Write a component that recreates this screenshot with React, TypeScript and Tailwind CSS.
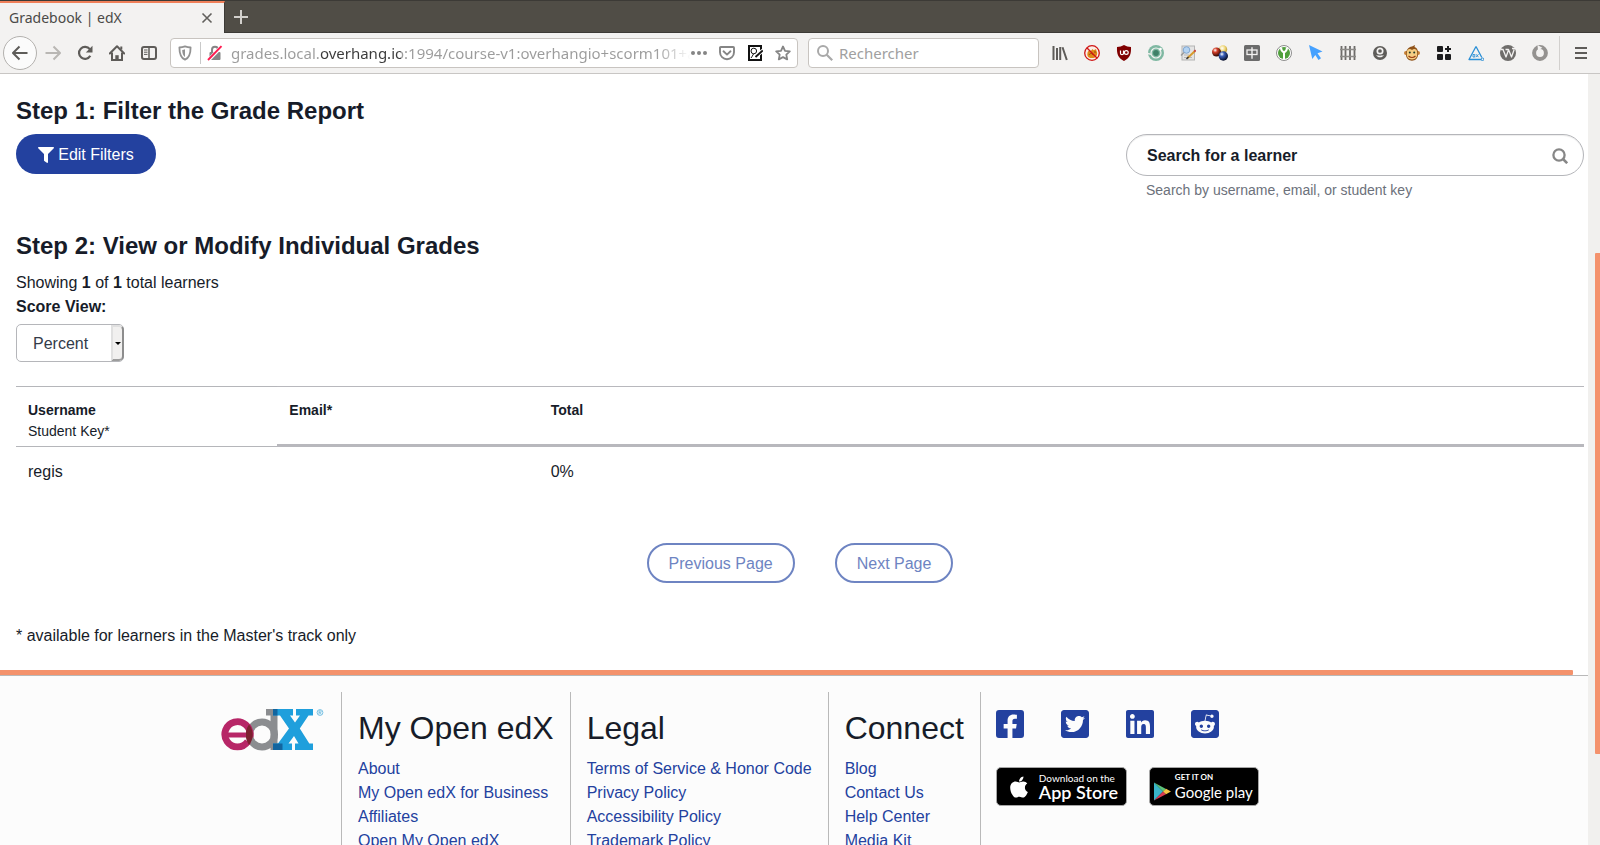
import type { ReactNode } from "react";
import {
  FaApple,
  FaFacebookSquare,
  FaFilter,
  FaLinkedin,
  FaRedditSquare,
  FaTwitterSquare,
} from "react-icons/fa";

function Glyph({ children, box = 16 }: { children: ReactNode; box?: number }) {
  return (
    <svg
      className="size-4 shrink-0"
      viewBox={`0 0 ${box} ${box}`}
      fill="none"
      aria-hidden="true"
    >
      {children}
    </svg>
  );
}

function ToolButton({ label, children }: { label: string; children: ReactNode }) {
  return (
    <button type="button" aria-label={label} className="flex size-8 shrink-0 items-center justify-center">
      {children}
    </button>
  );
}

function TabStrip() {
  return (
    <div className="flex h-[33px] shrink-0 border-t border-[#3c3a36] bg-[#504d46]">
      <div className="flex w-[225px] items-center justify-between border-t-2 border-r border-t-[#f0805a] border-r-[#3c3a36] bg-[#f3f2f1] pr-[11px] pl-[9px]">
        <span className="text-sm text-[#4b4a48]">Gradebook | edX</span>
        <button type="button" aria-label="Close tab" className="flex size-3 items-center justify-center">
          <svg viewBox="0 0 12 12" className="size-3" aria-hidden="true">
            <path d="M1.5 1.5l9 9M10.500 1.500l-9 9" stroke="#62605d" strokeWidth="1.600" />
          </svg>
        </button>
      </div>
      <div className="flex flex-1 items-center border-b border-[#3c3a36] pl-2">
        <button type="button" aria-label="New tab" className="size-4">
          <svg viewBox="0 0 16 16" className="size-4" aria-hidden="true">
            <path d="M8 1v14M1 8h14" stroke="#d2d0cc" strokeWidth="2" />
          </svg>
        </button>
      </div>
    </div>
  );
}

function NavigationButtons() {
  return (
    <div className="flex items-center pl-[3px]">
      <button
        type="button"
        aria-label="Back"
        className="flex size-[34px] items-center justify-center rounded-full border border-[#b3b1ae] bg-[#fbfbfb]"
      >
        <Glyph>
          <path d="M15.500 8H1.500M7.500 1.500L1 8l6.500 6.500" stroke="#5e5c59" strokeWidth="2" strokeLinejoin="round" />
        </Glyph>
      </button>
      <ToolButton label="Forward">
        <Glyph>
          <path d="M0.500 8h14M8.500 1.500L15 8l-6.500 6.500" stroke="#b9b7b4" strokeWidth="2" strokeLinejoin="round" />
        </Glyph>
      </ToolButton>
      <ToolButton label="Reload">
        <Glyph>
          <path d="M13.300 10.800A6 6 0 1 1 12.800 4.200" stroke="#5e5c59" strokeWidth="2.200" />
          <path d="M15.500 0.800v6.700H8.800z" fill="#5e5c59" />
        </Glyph>
      </ToolButton>
      <ToolButton label="Home">
        <Glyph>
          <path d="M0.800 8.500L8 1.300l7.200 7.200" stroke="#5e5c59" strokeWidth="2" strokeLinejoin="round" strokeLinecap="round" />
          <path d="M3 7.500V15h10V7.500" stroke="#5e5c59" strokeWidth="2" />
          <path d="M6.300 15v-4.800h3.400V15z" fill="#5e5c59" />
          <path d="M11.300 1.500h2v3h-2z" fill="#5e5c59" />
        </Glyph>
      </ToolButton>
      <ToolButton label="Sidebars">
        <Glyph>
          <rect x="1" y="2" width="14" height="12" rx="2" stroke="#5e5c59" strokeWidth="2" />
          <path d="M8 2v12" stroke="#5e5c59" strokeWidth="1.500" />
          <path d="M3 5h3.500M3 7.200h3.500M3 9.400h3.500" stroke="#5e5c59" strokeWidth="1" />
        </Glyph>
      </ToolButton>
    </div>
  );
}

function AddressBar() {
  return (
    <div className="ml-[5px] flex h-[30px] min-w-0 flex-1 items-center rounded-[4px] border border-[#c8c4c0] bg-white px-1.5">
      <button type="button" aria-label="Tracking protection" className="mr-[7px]">
        <Glyph>
          <path
            d="M8 1.400c2 .8 4 1.100 5.600 1.100 0 6-1 10.300-5.600 12.200C3.400 12.800 2.400 8.500 2.400 2.500 4 2.500 6 2.200 8 1.400z"
            stroke="#929292"
            strokeWidth="1.800"
            strokeLinejoin="round"
          />
          <path d="M8 4.300v7.800C6 10.700 5.300 8.300 5.200 5c1 0 2-.3 2.800-.7z" fill="#929292" />
        </Glyph>
      </button>
      <span className="h-[22px] w-px bg-[#c9c9c9]" />
      <button type="button" aria-label="Connection not secure" className="mr-2 ml-[6px]">
        <Glyph>
          <path d="M5 7.500V4.800a3 3 0 0 1 6 0v2.700" stroke="#858585" strokeWidth="2" />
          <rect x="2.500" y="7" width="11" height="8" rx="1" fill="#858585" />
          <path d="M1 15.500L15 1.200" stroke="#fff" strokeWidth="3.600" />
          <path d="M1 15L14.500 1.200" stroke="#ff1a4f" strokeWidth="1.900" />
        </Glyph>
      </button>
      <input
        type="text"
        aria-label="Address"
        defaultValue="grades.local.overhang.io:1994/course-v1:overhangio+scorm101+a"
        className="min-w-0 flex-1 bg-[linear-gradient(90deg,#9b9b9b_0_88px,#3a3a3a_88px_170px,#9b9b9b_170px_425px,transparent_460px)] bg-clip-text text-[15px] text-[#9b9b9b] outline-none [-webkit-text-fill-color:transparent]"
      />
      <div className="flex items-center gap-3">
        <button type="button" aria-label="Page actions">
          <Glyph>
            <circle cx="2" cy="8" r="2" fill="#858585" />
            <circle cx="8" cy="8" r="2" fill="#858585" />
            <circle cx="14" cy="8" r="2" fill="#858585" />
          </Glyph>
        </button>
        <button type="button" aria-label="Save to Pocket">
          <Glyph>
            <path d="M1.800 2h12.400c.5 0 .8.300.8.800v4.400a7 7 0 0 1-14 0V2.800c0-.5.300-.8.800-.8z" stroke="#858585" strokeWidth="1.900" />
            <path d="M4.500 6.300L8 9.600l3.500-3.300" stroke="#858585" strokeWidth="1.900" strokeLinecap="round" strokeLinejoin="round" />
          </Glyph>
        </button>
        <button type="button" aria-label="Reader tools">
          <Glyph>
            <rect x="2" y="1" width="12" height="14" stroke="#111" strokeWidth="2" />
            <circle cx="6.800" cy="6" r="2.800" stroke="#111" strokeWidth="1" />
            <path d="M4 13c1-1 1.500-2.500 2.500-4" stroke="#111" strokeWidth="1" />
            <path d="M15.800 5.500L7.500 12.500" stroke="#fff" strokeWidth="3.600" />
            <path d="M15.800 5.500L8.500 12" stroke="#111" strokeWidth="1.900" />
          </Glyph>
        </button>
        <button type="button" aria-label="Bookmark this page">
          <Glyph>
            <path
              d="M8 1.500l2 4.300 4.800.6-3.500 3.300.9 4.700L8 12.100l-4.200 2.300.9-4.700L1.200 6.400 6 5.800z"
              stroke="#858585"
              strokeWidth="1.800"
              strokeLinejoin="round"
            />
          </Glyph>
        </button>
      </div>
    </div>
  );
}

function Extensions() {
  return (
    <div className="flex items-center pl-[5px]">
      <ToolButton label="Library">
        <Glyph>
          <path d="M1.500 1v14M5 3v12M8.200 2v13M10.500 2.200L14.800 15" stroke="#5e5c59" strokeWidth="2" />
        </Glyph>
      </ToolButton>
      <ToolButton label="Cookie blocker">
        <Glyph>
          <circle cx="8" cy="8" r="7.300" fill="#fbeee6" />
          <path d="M3.500 8c0-2 1.500-2.500 3.500-2.200L8.500 4l1.200 1.200L12 4l.5 2c1 1.500 1 4-.5 5.500-1 1.800-5 2-7 1C3.500 12 3 10 3.500 8z" fill="#e08818" />
          <path d="M5 10c1-2 3-2 4 0M10 7h2" stroke="#8f4f0a" strokeWidth="1" />
          <circle cx="8" cy="8" r="7.300" stroke="#cf1515" strokeWidth="1.300" />
          <path d="M2.800 2.800l10.400 10.400" stroke="#cf1515" strokeWidth="1.300" />
        </Glyph>
      </ToolButton>
      <ToolButton label="Content blocker">
        <Glyph>
          <path d="M8 0c2 1.200 4.500 2 7 2 .3 7-1 11-7 14C2 13 .7 9 1 2c2.500 0 5-.8 7-2z" fill="#800000" />
          <path d="M4.500 5.500v2.700c0 2 3 2 3 0V5.500" stroke="#fff" strokeWidth="1.200" />
          <circle cx="10.300" cy="7.500" r="1.900" stroke="#fff" strokeWidth="1.200" />
        </Glyph>
      </ToolButton>
      <ToolButton label="Privacy eye">
        <Glyph>
          <circle cx="8" cy="8" r="8" fill="#7fb8a2" />
          <circle cx="8" cy="8" r="5" fill="#7fb8a2" stroke="#f3f2f1" strokeWidth="1.200" />
          <circle cx="8" cy="8" r="2.900" fill="#3f8068" />
          <circle cx="12.500" cy="4" r="1.300" fill="#fff" />
          <path d="M0 8.500l3 .8" stroke="#f3f2f1" strokeWidth="1.300" />
        </Glyph>
      </ToolButton>
      <ToolButton label="Page notes">
        <Glyph>
          <rect x="2" y="1" width="12.500" height="14" fill="#e4e4e4" stroke="#b4b4b4" />
          <path d="M4 12.500h8M4 10h5" stroke="#b8b8b8" />
          <circle cx="6.500" cy="5" r="3.300" fill="#b4d3f2" stroke="#7fa6d0" />
          <path d="M4 7.500L1 10.500" stroke="#999" strokeWidth="1.500" />
          <path d="M15 6l-7.500 7" stroke="#d69b2d" strokeWidth="2" />
          <path d="M8.500 12l-2 2" stroke="#333" strokeWidth="1.500" />
          <path d="M15.700 5.200l-1.400 1.400" stroke="#c94040" strokeWidth="2" />
        </Glyph>
      </ToolButton>
      <ToolButton label="Containers">
        <Glyph>
          <defs>
            <radialGradient id="redBall" cx="0.350" cy="0.300" r="0.700">
              <stop offset="0" stopColor="#fff" />
              <stop offset="0.350" stopColor="#d6402a" />
              <stop offset="1" stopColor="#2a0703" />
            </radialGradient>
            <radialGradient id="yellowBall" cx="0.400" cy="0.350" r="0.700">
              <stop offset="0" stopColor="#fff" />
              <stop offset="0.500" stopColor="#f0d878" />
              <stop offset="1" stopColor="#b08a20" />
            </radialGradient>
            <radialGradient id="blueBall" cx="0.350" cy="0.300" r="0.700">
              <stop offset="0" stopColor="#fff" />
              <stop offset="0.350" stopColor="#3a5fb8" />
              <stop offset="1" stopColor="#050d2b" />
            </radialGradient>
          </defs>
          <circle cx="11" cy="4.500" r="4.200" fill="url(#yellowBall)" />
          <circle cx="4.500" cy="7" r="4.500" fill="url(#redBall)" />
          <circle cx="11.300" cy="11" r="4.700" fill="url(#blueBall)" />
        </Glyph>
      </ToolButton>
      <ToolButton label="Dictionary">
        <Glyph>
          <rect width="16" height="16" rx="1.500" fill="#6b6b6b" />
          <rect x="3" y="5" width="10" height="4.500" stroke="#f3f2f1" strokeWidth="1.300" />
          <path d="M8 2.300v11.500" stroke="#f3f2f1" strokeWidth="1.400" />
        </Glyph>
      </ToolButton>
      <ToolButton label="Password vault">
        <Glyph>
          <circle cx="8" cy="8" r="7.500" fill="#fff" stroke="#8d8d8d" />
          <circle cx="8" cy="8" r="6" fill="#4f9f3c" />
          <path d="M5 2.500c0 3 1 4 3 5 2-1 3-2 3-5M8 7v7" stroke="#fff" strokeWidth="2" />
        </Glyph>
      </ToolButton>
      <ToolButton label="Pointer">
        <Glyph>
          <path d="M1 0l13.500 6.500-5 1.700 3.500 5-2.500 1.800-3.200-5-3 4z" fill="#45a1ff" />
        </Glyph>
      </ToolButton>
      <ToolButton label="Fence">
        <Glyph>
          <path d="M1.500 1v14M5.500 1v14M10 1v14M14.500 1v14" stroke="#6d6b69" strokeWidth="1.800" />
          <path d="M0 4.500h16M0 11.500h16" stroke="#8d8b89" strokeWidth="1.300" />
        </Glyph>
      </ToolButton>
      <ToolButton label="Account">
        <Glyph>
          <circle cx="8" cy="8" r="7" fill="#5e5c59" />
          <circle cx="8" cy="6" r="2.700" stroke="#f3f2f1" strokeWidth="1.700" />
          <path d="M3.800 9.800c2 3.400 6.400 3.400 8.400 0-2 1.200-6.400 1.200-8.400 0z" fill="#f3f2f1" />
        </Glyph>
      </ToolButton>
      <ToolButton label="User scripts">
        <Glyph>
          <circle cx="2" cy="8" r="2" fill="#c98338" />
          <circle cx="14" cy="8" r="2" fill="#c98338" />
          <path d="M8 1.500l3-1.500-.5 2c3 1 4 4 3.500 8-.5 4-3 5.700-6 5.700S2.500 14 2 10c-.5-4 2-8 6-8.500z" fill="#8f5218" />
          <path d="M8 5c2-2 5-1 5 1.500 1 5-1 8-5 8s-6-3-5-8C3 4 6 3 8 5z" fill="#f5cd83" />
          <circle cx="5.800" cy="7.500" r="1" fill="#1f3a2a" />
          <circle cx="10.200" cy="7.500" r="1" fill="#1f3a2a" />
          <path d="M4.500 11c2 2 5 2 7 0" stroke="#9a3c12" strokeWidth="1.100" />
        </Glyph>
      </ToolButton>
      <ToolButton label="Add-on grid">
        <Glyph>
          <rect x="1" y="1" width="6" height="6" rx="1" fill="#1c1c1e" />
          <rect x="1" y="9" width="6" height="6" rx="1" fill="#1c1c1e" />
          <rect x="9" y="9" width="6" height="6" rx="1" fill="#1c1c1e" />
          <path d="M12 1v6M9 4h6" stroke="#1c1c1e" strokeWidth="2" />
        </Glyph>
      </ToolButton>
      <ToolButton label="Accessibility audit">
        <Glyph>
          <path d="M8 1.500L1 14.500h13.500M8 1.500l5.800 11" stroke="#2a8fd6" strokeWidth="1.300" strokeLinejoin="round" />
          <circle cx="14.500" cy="14.300" r="1.300" fill="#f3f2f1" stroke="#2a8fd6" />
          <path d="M5 9.500h1.800v2.500H5zM8 9.200l2.500 3M10.500 9.200L8 12.200" stroke="#2a8fd6" strokeWidth="0.900" />
        </Glyph>
      </ToolButton>
      <ToolButton label="Web archive">
        <Glyph>
          <circle cx="8" cy="8" r="8" fill="#6f6d6b" />
          <path d="M0.500 4.500h3M3 4.500l3 7.500 2.300-6.500M5.500 4.500h3l3 7.500 2.700-7.500M12 3.500h3" stroke="#f3f2f1" strokeWidth="1.300" strokeLinejoin="round" />
        </Glyph>
      </ToolButton>
      <ToolButton label="Power">
        <Glyph>
          <circle cx="8" cy="8" r="5.900" stroke="#949290" strokeWidth="4" />
          <path d="M5.500 0l4.800 2.800L6 5.500z" fill="#f3f2f1" />
        </Glyph>
      </ToolButton>
    </div>
  );
}

function Toolbar() {
  return (
    <div className="flex h-[41px] shrink-0 items-center border-b border-[#c8c6c4] bg-[#f3f2f1]">
      <NavigationButtons />
      <AddressBar />
      <label className="ml-2.5 flex h-[30px] w-[231px] shrink-0 items-center gap-1.5 rounded-[4px] border border-[#c8c4c0] bg-white px-2">
        <Glyph>
          <circle cx="6" cy="6" r="5" stroke="#a9a9a9" strokeWidth="2" />
          <path d="M9.700 9.700l5.500 5.500" stroke="#a9a9a9" strokeWidth="2.200" />
        </Glyph>
        <input
          type="text"
          aria-label="Rechercher"
          placeholder="Rechercher"
          className="w-full min-w-0 text-[15px] outline-none placeholder:text-[#a0a0a0]"
        />
      </label>
      <Extensions />
      <div className="ml-[3px] flex items-center border-l border-[#d2d0ce] pr-1 pl-[5px]">
        <button type="button" aria-label="Open menu" className="flex h-[34px] w-[31px] items-center justify-center">
          <Glyph>
            <path d="M2 3h12M2 8h12M2 13h12" stroke="#5e5c59" strokeWidth="2" />
          </Glyph>
        </button>
      </div>
    </div>
  );
}

function FilterStep() {
  return (
    <section>
      <h3 className="text-2xl leading-8 font-bold">Step 1: Filter the Grade Report</h3>
      <div className="mt-[7px] flex items-start justify-between">
        <button
          type="button"
          className="flex h-10 w-[140px] items-center justify-center gap-1 rounded-full bg-[#23419f] pt-0.5 text-white"
        >
          <FaFilter className="size-4" aria-hidden="true" />
          Edit Filters
        </button>
        <div className="w-[458px]">
          <div className="flex h-[42px] items-center rounded-full border border-[#b5b6ba] pt-0.5 pr-[15px] pl-5 shadow-[inset_0_1px_1px_rgba(0,0,0,0.075)]">
            <input
              type="text"
              aria-label="Search for a learner"
              aria-describedby="learner-hint"
              placeholder="Search for a learner"
              className="min-w-0 flex-1 font-bold outline-none placeholder:text-[#171c29] placeholder:opacity-100"
            />
            <button type="button" aria-label="Submit search">
              <svg viewBox="0 0 16 16" className="size-4" fill="none" aria-hidden="true">
                <circle cx="7" cy="7" r="5.600" stroke="#878787" strokeWidth="2.300" />
                <path d="M11 11l4.200 4.200" stroke="#878787" strokeWidth="2.600" />
              </svg>
            </button>
          </div>
          <p id="learner-hint" className="mt-0.5 pl-5 text-sm leading-6 text-[#6c717b]">
            Search by username, email, or student key
          </p>
        </div>
      </div>
    </section>
  );
}

function GradesStep() {
  return (
    <section className="mt-7">
      <h3 className="text-2xl leading-8 font-bold">Step 2: View or Modify Individual Grades</h3>
      <p className="mt-[9px]">
        Showing <b>1</b> of <b>1</b> total learners
      </p>
      <label htmlFor="score-view" className="block font-bold">
        Score View:
      </label>
      <div className="relative mt-[5px] w-[108px]">
        <select
          id="score-view"
          className="block h-[38px] w-full appearance-none rounded-[5px] border border-[#b5b6ba] bg-white pt-0.5 pl-4 text-[#333b49]"
        >
          <option>Percent</option>
          <option>Absolute</option>
        </select>
        <span className="pointer-events-none absolute inset-y-px right-0 flex w-[13px] items-center justify-center rounded-r-[5px] border-2 border-t-[#e0e0e0] border-r-[#8d8d8d] border-b-[#9d9d9d] border-l-[#e0e0e0] bg-[#f1f0ef]">
          <svg viewBox="0 0 6 3" className="h-[3px] w-1.5 shrink-0" aria-hidden="true">
            <path d="M0 0h6L3 3z" fill="#000" />
          </svg>
        </span>
      </div>
      <table className="mt-6 w-full table-fixed border-separate border-spacing-0 text-left">
        <colgroup>
          <col className="w-1/6" />
          <col className="w-1/6" />
          <col className="w-2/3" />
        </colgroup>
        <thead className="align-top text-sm leading-[21px]">
          <tr>
            <th className="border-y border-[#b5b6ba] px-3 pt-[13px] pb-1">
              Username
              <span className="block font-normal">Student Key*</span>
            </th>
            <th className="border-t border-b-3 border-[#b8b8bd] px-3 pt-[13px] pb-0.5">Email*</th>
            <th className="border-t border-b-3 border-[#b8b8bd] px-3 pt-[13px] pb-0.5">Total</th>
          </tr>
        </thead>
        <tbody>
          <tr>
            <td className="px-3 pt-[13px] pb-[11px]">regis</td>
            <td className="px-3 pt-[13px] pb-[11px]" />
            <td className="px-3 pt-[13px] pb-[11px]">0%</td>
          </tr>
        </tbody>
      </table>
      <div className="mt-12 flex justify-center gap-10">
        <button type="button" className="h-10 rounded-full border-2 border-[#6e84c2] px-5 pt-0.5 text-[#6e84c2]">
          Previous Page
        </button>
        <button type="button" className="h-10 rounded-full border-2 border-[#6e84c2] px-5 pt-0.5 text-[#6e84c2]">
          Next Page
        </button>
      </div>
      <p className="mt-[41px]">* available for learners in the Master's track only</p>
    </section>
  );
}

function EdxLogo() {
  return (
    <svg viewBox="0 0 104 44" className="h-11 w-[104px]" fill="none" role="img" aria-label="edX">
      <circle cx="41" cy="26.500" r="12.500" stroke="#8b8d90" strokeWidth="7" />
      <path d="M45 1h11.500v41H49.500V7.500H45z" fill="#8b8d90" />
      <path d="M29 27.500A12.600 12.600 0 1 0 26.800 33.500" stroke="#b72667" strokeWidth="6.800" />
      <path d="M4 27h28.500" stroke="#b72667" strokeWidth="5" />
      <path d="M28 16.500a16 16 0 0 1 0 20.500 16 16 0 0 1-3-7.500v-5.500a16 16 0 0 1 3-7.500z" fill="#7c2130" />
      <path
        d="M52 1h20v6.500h-3L74 14.500l5-7H75V1h17v6.500h-4.500L78.800 20.500l9.500 15H92V42H74v-6.500h3.500L73 28l-5.500 7.500H71V42H52v-6.500h5L68 20.500 59 7.500h-7z"
        fill="#1f9fdc"
      />
      <path d="M52 1h4.500v6.500H52zM52 35.500h9.500V42H52z" fill="#12659f" />
      <circle cx="99" cy="4.500" r="2.900" stroke="#58b2dd" strokeWidth="0.800" />
      <path d="M98 6.300V2.900h1.400a.9.900 0 0 1 0 1.800H98m1.200 0l1 1.600" stroke="#58b2dd" strokeWidth="0.700" />
    </svg>
  );
}

function LinkColumn({ title, links }: { title: string; links: string[] }) {
  return (
    <div className="shrink-0 border-l border-[#b9b9b9] p-4">
      <h2 className="text-[32px] leading-10">{title}</h2>
      <ul className="mt-[9px]">
        {links.map((link) => (
          <li key={link}>
            <a href="#" className="text-[#23419f]">
              {link}
            </a>
          </li>
        ))}
      </ul>
    </div>
  );
}

function PlayMark() {
  return (
    <svg viewBox="0 0 17 19" className="h-[19px] w-[17px] shrink-0" aria-hidden="true">
      <path d="M0 0.500L9 9.500 0 18.500z" fill="#38b5c9" />
      <path d="M0 0.500L12 7 9 9.500z" fill="#5cc27a" />
      <path d="M0 18.500L12 12.300 9 9.500z" fill="#d93b52" />
      <path d="M12 6.800l5 2.700-5 2.800-3-2.800z" fill="#f6c544" />
    </svg>
  );
}

function Footer() {
  return (
    <footer className="border-t border-[#b9b9b9] bg-[#fcfcfc]">
      <div className="mx-auto flex w-full max-w-[1178px] px-4 pt-4">
        <div className="w-[120px] shrink-0 pt-4">
          <a href="#" aria-label="edX home" className="block">
            <EdxLogo />
          </a>
        </div>
        <LinkColumn
          title="My Open edX"
          links={["About", "My Open edX for Business", "Affiliates", "Open My Open edX"]}
        />
        <LinkColumn
          title="Legal"
          links={["Terms of Service & Honor Code", "Privacy Policy", "Accessibility Policy", "Trademark Policy"]}
        />
        <LinkColumn title="Connect" links={["Blog", "Contact Us", "Help Center", "Media Kit"]} />
        <div className="flex-1 border-l border-[#b9b9b9] py-4 pl-[15px]">
          <div className="flex gap-[37px] text-[#23419f]">
            <a href="#" aria-label="Facebook">
              <FaFacebookSquare className="h-8 w-7" />
            </a>
            <a href="#" aria-label="Twitter">
              <FaTwitterSquare className="h-8 w-7" />
            </a>
            <a href="#" aria-label="LinkedIn">
              <FaLinkedin className="h-8 w-7" />
            </a>
            <a href="#" aria-label="Reddit">
              <FaRedditSquare className="h-8 w-7" />
            </a>
          </div>
          <div className="mt-[27px] flex gap-[22px] font-[Lato,sans-serif] text-white">
            <a
              href="#"
              className="flex h-[39px] w-[131px] items-center gap-2 rounded-[5px] border border-[#a6a6a6] bg-black pl-2.5"
            >
              <FaApple className="size-6 shrink-0" aria-hidden="true" />
              <span className="flex flex-col whitespace-nowrap">
                <span className="text-[10px] leading-[10px]">Download on the</span>
                <span className="text-lg leading-[18px] font-semibold">App Store</span>
              </span>
            </a>
            <a
              href="#"
              className="flex h-[39px] w-[110px] items-center gap-1 rounded-[5px] border border-[#a6a6a6] bg-black pl-1"
            >
              <span className="pt-2.5">
                <PlayMark />
              </span>
              <span className="flex flex-col whitespace-nowrap">
                <span className="text-[8px] leading-[10px] font-bold">GET IT ON</span>
                <span className="text-[15px] leading-5">Google play</span>
              </span>
            </a>
          </div>
        </div>
      </div>
    </footer>
  );
}

export default function App() {
  return (
    <div className="flex h-screen flex-col overflow-hidden bg-white font-['Noto_Sans',sans-serif]">
      <TabStrip />
      <Toolbar />
      <div className="flex min-h-0 flex-1 font-['Liberation_Sans',Arial,sans-serif] text-base text-[#171c29]">
        <div className="min-w-0 flex-1 overflow-hidden">
          <main className="relative pt-[21px] pr-1 pb-[27px] pl-4">
            <FilterStep />
            <GradesStep />
            <div className="absolute bottom-0 left-0 h-[5px] w-[calc(100%-15px)] rounded-r-[1px] bg-[#f4926c]" />
          </main>
          <Footer />
        </div>
        <div className="flex w-3 shrink-0 justify-end bg-[#f1f0ee] pt-[179px] pb-[91px]">
          <div className="w-[5px] rounded-l-[1px] bg-[#f4926c]" />
        </div>
      </div>
    </div>
  );
}
